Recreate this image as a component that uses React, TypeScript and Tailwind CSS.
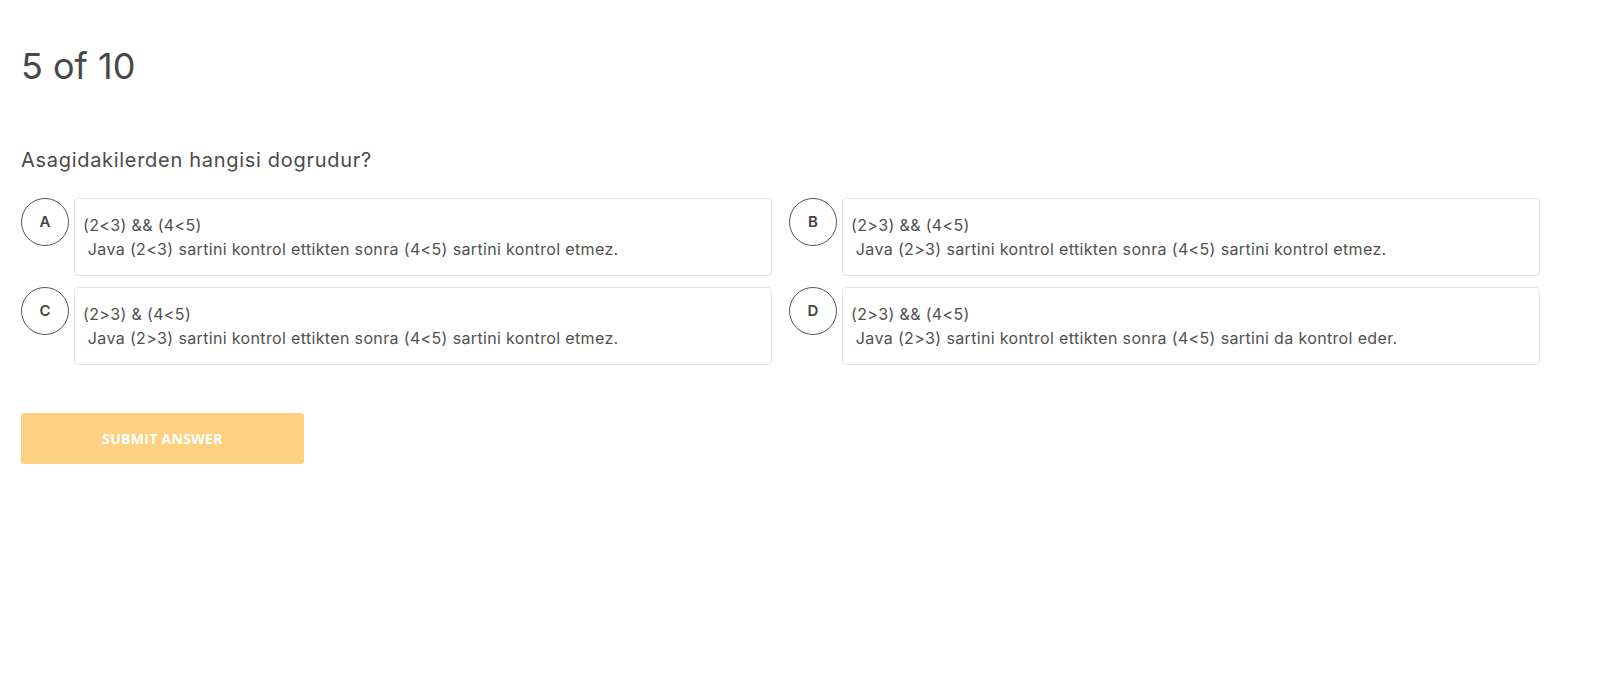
import React from "react";

const OPTIONS = [
  { key: "A", expr: "(2<3) && (4<5)", text: "Java (2<3) sartini kontrol ettikten sonra (4<5) sartini kontrol etmez." },
  { key: "B", expr: "(2>3) && (4<5)", text: "Java (2>3) sartini kontrol ettikten sonra (4<5) sartini kontrol etmez." },
  { key: "C", expr: "(2>3) & (4<5)", text: "Java (2>3) sartini kontrol ettikten sonra (4<5) sartini kontrol etmez." },
  { key: "D", expr: "(2>3) && (4<5)", text: "Java (2>3) sartini kontrol ettikten sonra (4<5) sartini da kontrol eder." },
];

export default function App() {
  return (
    <div className="min-h-screen bg-white pl-[21px] pr-[63px] font-['Inter',sans-serif] text-[#4a4a4a]">
      <h1 className="pt-[44px] text-[36px] leading-[44px] font-normal text-[#484848]">5 of 10</h1>

      <p className="mt-[60px] text-[20px] leading-[24px] tracking-[0.7px] text-[#4a4a4a]">Asagidakilerden hangisi dogrudur?</p>

      {/* Seçenekler */}
      <div className="mt-[26px] grid grid-cols-2 gap-x-[17px] gap-y-[11px]">
        {OPTIONS.map(o => (
          <div key={o.key} className="flex items-start gap-[5px]">
            <div className="w-[48px] h-[48px] shrink-0 rounded-full border border-[#555] flex items-center justify-center text-[15px] font-semibold text-[#444]">
              {o.key}
            </div>
            <div className="flex-1 h-[78px] rounded-[4px] border border-[#dbe6f1] px-[8px] py-[14px] text-[16px] leading-[24px] tracking-[0.35px] text-[#505050]">
              {o.expr}
              <br />
              {"\u00a0" + o.text}
            </div>
          </div>
        ))}
      </div>

      <button className="mt-[48px] w-[283px] h-[51px] rounded-[3px] bg-[#fed081] text-white text-[14px] tracking-[0.3px] font-bold uppercase font-['Open_Sans',sans-serif] border-none">
        Submit Answer
      </button>
    </div>
  );
}
